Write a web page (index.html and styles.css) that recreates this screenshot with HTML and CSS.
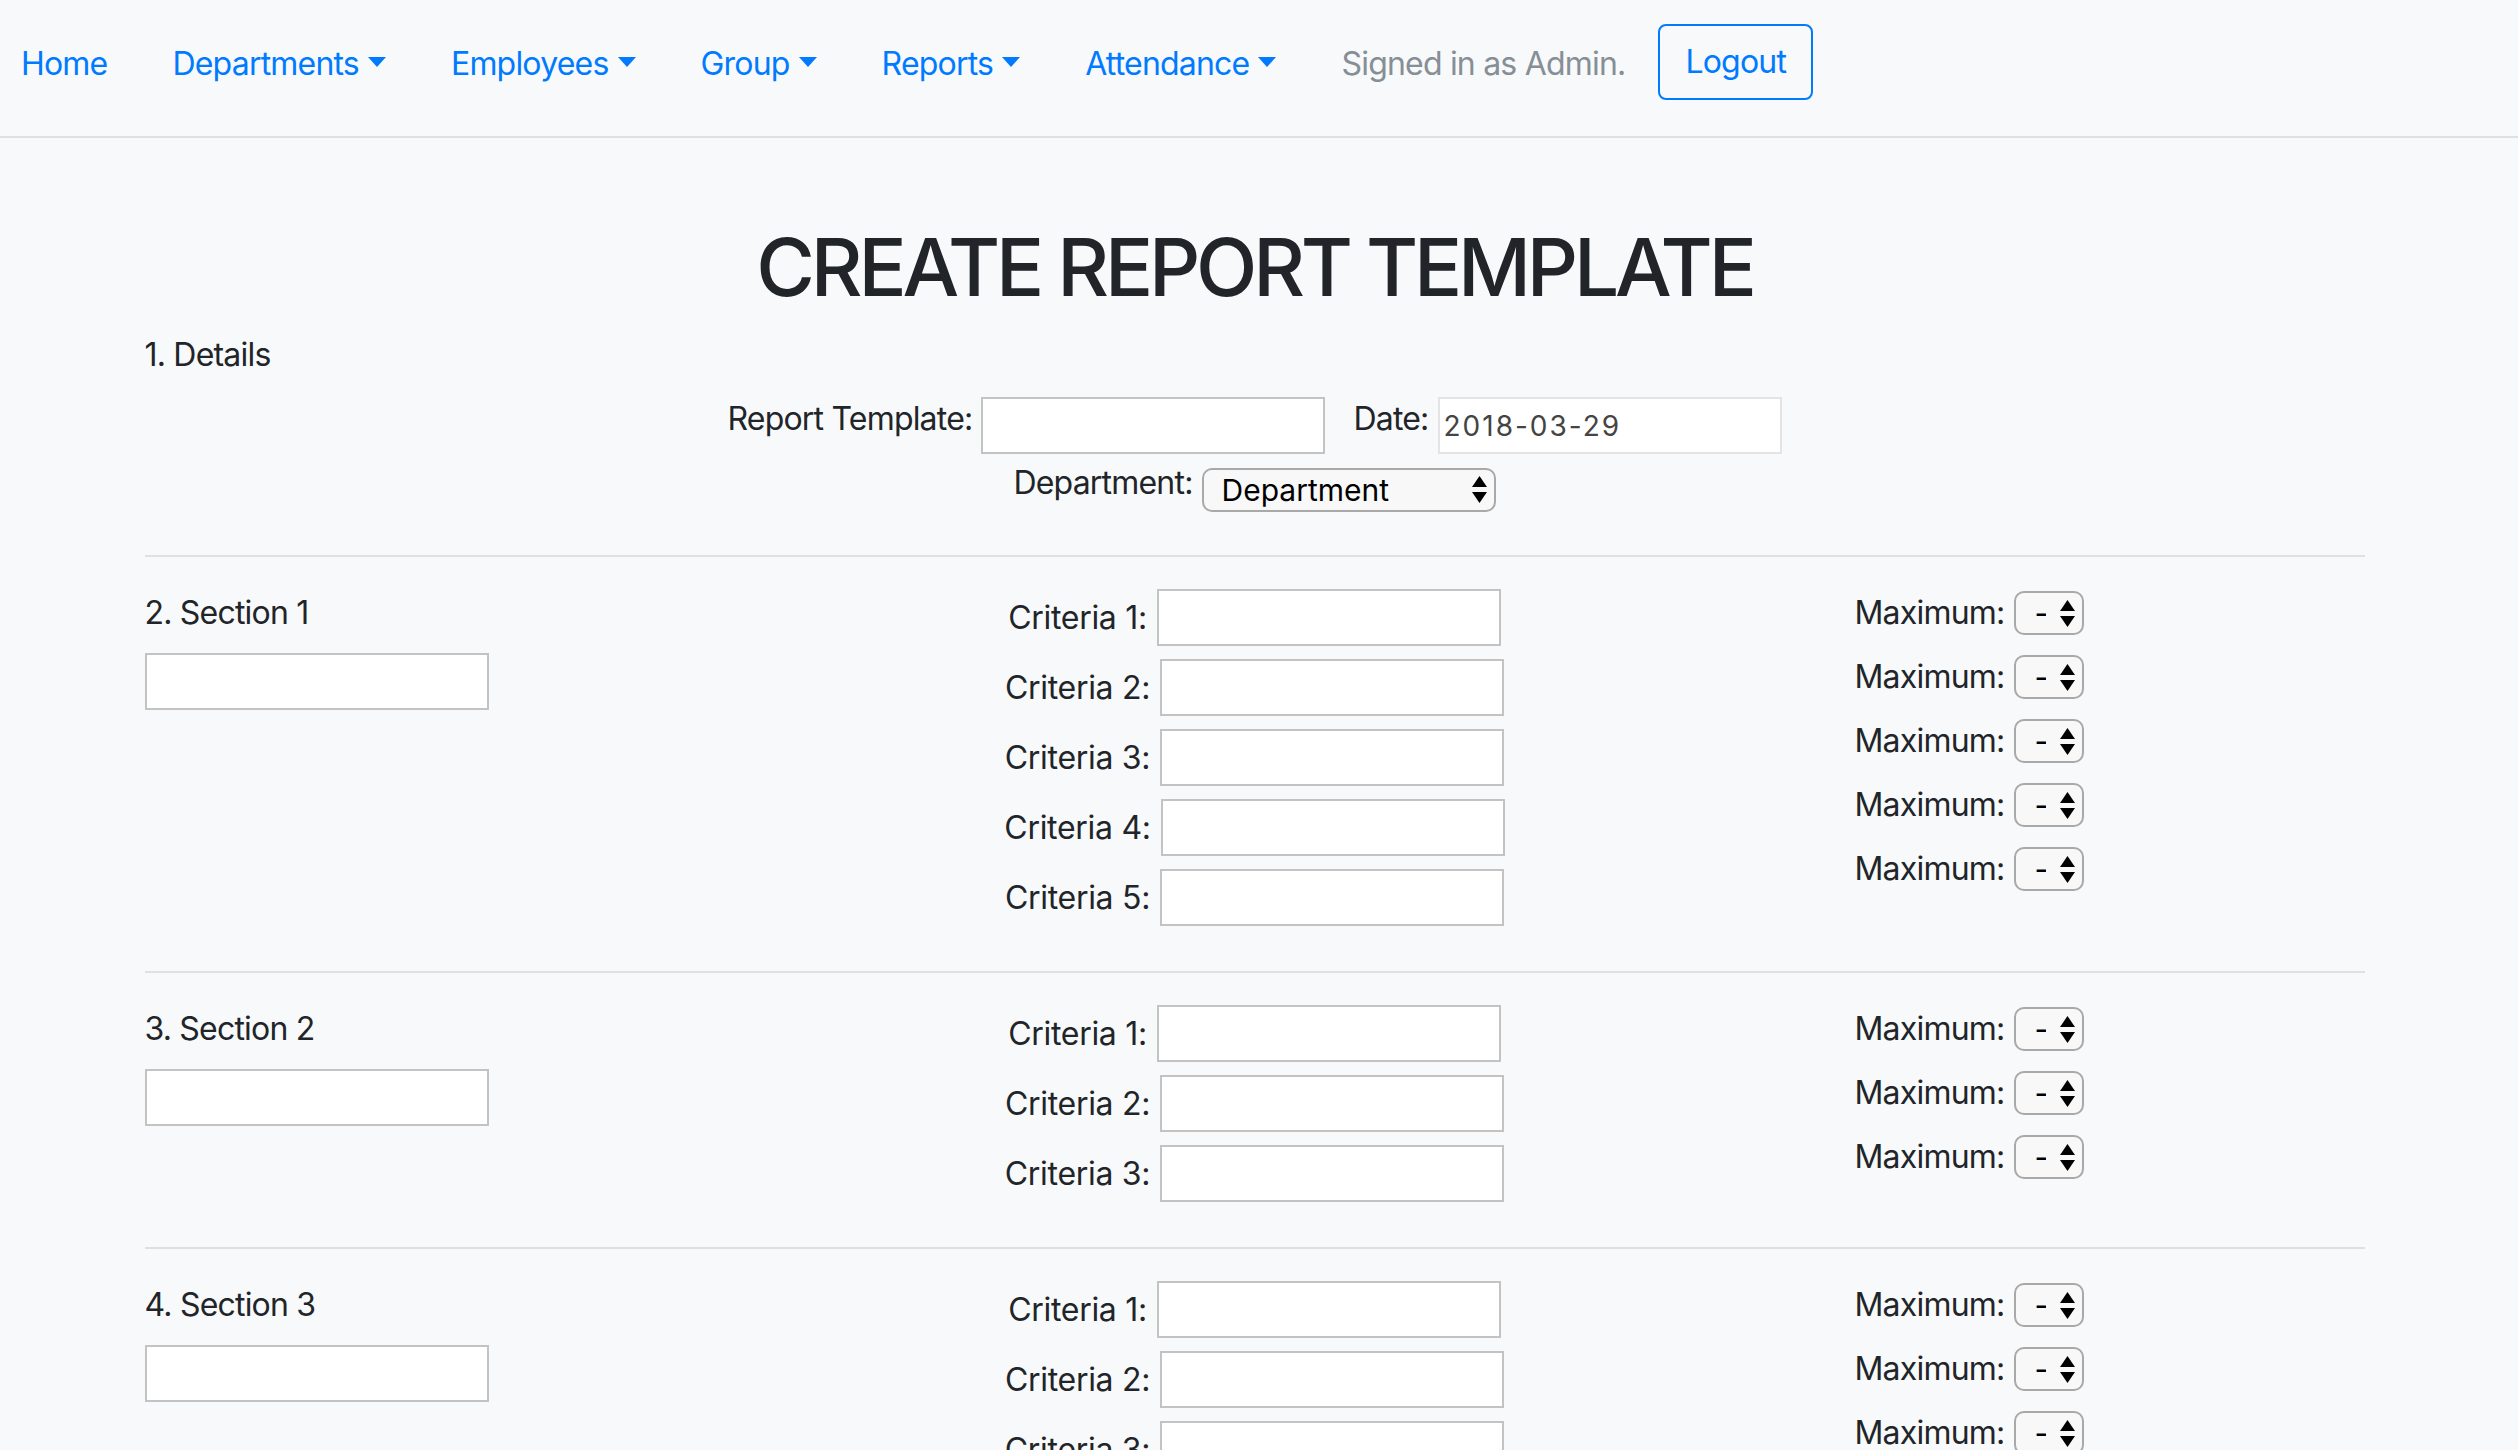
FILE: index.html
```html
<!DOCTYPE html>
<html lang="en">
<head>
<meta charset="utf-8">
<title>Create Report Template</title>
<link rel="stylesheet" href="styles.css">
</head>
<body>
<nav class="navbar">
  <ul class="nav">
    <li><a class="nav-link" href="#">Home</a></li>
    <li><a class="nav-link dropdown" href="#">Departments</a></li>
    <li><a class="nav-link dropdown" href="#">Employees</a></li>
    <li><a class="nav-link dropdown" href="#">Group</a></li>
    <li><a class="nav-link dropdown" href="#">Reports</a></li>
    <li><a class="nav-link dropdown" href="#">Attendance</a></li>
  </ul>
  <span class="navbar-text">Signed in as Admin.</span>
  <button class="btn-logout" type="button">Logout</button>
</nav>

<div class="page">
<main class="container">
  <h1 class="title">CREATE REPORT TEMPLATE</h1>
  <form class="report-form">
    <div class="details">
      <p class="step">1. Details</p>
      <div class="details-row">
        <label class="inline-label">Report Template:</label>
        <input class="field" type="text">
        <label class="inline-label date-label">Date:</label>
        <input class="field field-date" type="text" value="2018-03-29" disabled>
      </div>
      <div class="details-row details-row-2">
        <label class="inline-label">Department:</label>
        <span class="select select-lg">
          <select><option>Department</option></select>
          <svg class="select-arrows" viewBox="0 0 15 27"><polygon points="7.5,0 15,11 0,11"/><polygon points="0,16 15,16 7.5,27"/></svg>
        </span>
      </div>
    </div>

    <hr class="divider">
    <section class="section">
      <div class="section-name">
        <p class="step">2. Section 1</p>
        <input class="field" type="text">
      </div>
      <div class="criteria">
        <div class="criteria-row"><label class="crit-label">Criteria 1:</label><input class="field" type="text"></div>
        <div class="criteria-row"><label class="crit-label">Criteria 2:</label><input class="field" type="text"></div>
        <div class="criteria-row"><label class="crit-label">Criteria 3:</label><input class="field" type="text"></div>
        <div class="criteria-row"><label class="crit-label">Criteria 4:</label><input class="field" type="text"></div>
        <div class="criteria-row"><label class="crit-label">Criteria 5:</label><input class="field" type="text"></div>
      </div>
      <div class="maximums">
        <div class="max-row"><label>Maximum:</label><span class="select select-sm"><select><option>-</option></select><svg class="select-arrows" viewBox="0 0 15 27"><polygon points="7.5,0 15,11 0,11"/><polygon points="0,16 15,16 7.5,27"/></svg></span></div>
        <div class="max-row"><label>Maximum:</label><span class="select select-sm"><select><option>-</option></select><svg class="select-arrows" viewBox="0 0 15 27"><polygon points="7.5,0 15,11 0,11"/><polygon points="0,16 15,16 7.5,27"/></svg></span></div>
        <div class="max-row"><label>Maximum:</label><span class="select select-sm"><select><option>-</option></select><svg class="select-arrows" viewBox="0 0 15 27"><polygon points="7.5,0 15,11 0,11"/><polygon points="0,16 15,16 7.5,27"/></svg></span></div>
        <div class="max-row"><label>Maximum:</label><span class="select select-sm"><select><option>-</option></select><svg class="select-arrows" viewBox="0 0 15 27"><polygon points="7.5,0 15,11 0,11"/><polygon points="0,16 15,16 7.5,27"/></svg></span></div>
        <div class="max-row"><label>Maximum:</label><span class="select select-sm"><select><option>-</option></select><svg class="select-arrows" viewBox="0 0 15 27"><polygon points="7.5,0 15,11 0,11"/><polygon points="0,16 15,16 7.5,27"/></svg></span></div>
      </div>
    </section>

    <hr class="divider">
    <section class="section">
      <div class="section-name">
        <p class="step">3. Section 2</p>
        <input class="field" type="text">
      </div>
      <div class="criteria">
        <div class="criteria-row"><label class="crit-label">Criteria 1:</label><input class="field" type="text"></div>
        <div class="criteria-row"><label class="crit-label">Criteria 2:</label><input class="field" type="text"></div>
        <div class="criteria-row"><label class="crit-label">Criteria 3:</label><input class="field" type="text"></div>
      </div>
      <div class="maximums">
        <div class="max-row"><label>Maximum:</label><span class="select select-sm"><select><option>-</option></select><svg class="select-arrows" viewBox="0 0 15 27"><polygon points="7.5,0 15,11 0,11"/><polygon points="0,16 15,16 7.5,27"/></svg></span></div>
        <div class="max-row"><label>Maximum:</label><span class="select select-sm"><select><option>-</option></select><svg class="select-arrows" viewBox="0 0 15 27"><polygon points="7.5,0 15,11 0,11"/><polygon points="0,16 15,16 7.5,27"/></svg></span></div>
        <div class="max-row"><label>Maximum:</label><span class="select select-sm"><select><option>-</option></select><svg class="select-arrows" viewBox="0 0 15 27"><polygon points="7.5,0 15,11 0,11"/><polygon points="0,16 15,16 7.5,27"/></svg></span></div>
      </div>
    </section>

    <hr class="divider">
    <section class="section">
      <div class="section-name">
        <p class="step">4. Section 3</p>
        <input class="field" type="text">
      </div>
      <div class="criteria">
        <div class="criteria-row"><label class="crit-label">Criteria 1:</label><input class="field" type="text"></div>
        <div class="criteria-row"><label class="crit-label">Criteria 2:</label><input class="field" type="text"></div>
        <div class="criteria-row"><label class="crit-label">Criteria 3:</label><input class="field" type="text"></div>
      </div>
      <div class="maximums">
        <div class="max-row"><label>Maximum:</label><span class="select select-sm"><select><option>-</option></select><svg class="select-arrows" viewBox="0 0 15 27"><polygon points="7.5,0 15,11 0,11"/><polygon points="0,16 15,16 7.5,27"/></svg></span></div>
        <div class="max-row"><label>Maximum:</label><span class="select select-sm"><select><option>-</option></select><svg class="select-arrows" viewBox="0 0 15 27"><polygon points="7.5,0 15,11 0,11"/><polygon points="0,16 15,16 7.5,27"/></svg></span></div>
        <div class="max-row"><label>Maximum:</label><span class="select select-sm"><select><option>-</option></select><svg class="select-arrows" viewBox="0 0 15 27"><polygon points="7.5,0 15,11 0,11"/><polygon points="0,16 15,16 7.5,27"/></svg></span></div>
      </div>
    </section>
  </form>
</main>
</div>
</body>
</html>
```

FILE: styles.css
```css
* { box-sizing: border-box; }

html, body { margin: 0; padding: 0; }

body {
  background: #f8f9fa;
  color: #212529;
  font-family: Inter, "Noto Sans", "Liberation Sans", sans-serif;
  font-size: 32px;
  line-height: 48px;
  letter-spacing: -0.8px;
  overflow: hidden;
}

/* ---------- navbar ---------- */
.navbar {
  display: flex;
  align-items: flex-start;
  height: 138px;
  padding: 24px 0 0 21px;
  border-bottom: 2px solid #dfe0e1;
}

.nav {
  display: flex;
  gap: 65px;
  list-style: none;
  margin: 0;
  padding: 0;
}

.nav-link {
  display: block;
  padding: 16px 0;
  color: #007bff;
  text-decoration: none;
}

.dropdown::after {
  content: "";
  display: inline-block;
  margin-left: 9px;
  vertical-align: 8px;
  border-top: 10px solid;
  border-left: 9.5px solid transparent;
  border-right: 9.5px solid transparent;
}

.navbar-text {
  padding: 16px 0;
  margin-left: 65px;
  margin-right: 33px;
  color: #868e96;
}

.btn-logout {
  font: inherit;
  letter-spacing: inherit;
  line-height: 48px;
  color: #007bff;
  background: transparent;
  border: 2px solid #007bff;
  border-radius: 8px;
  padding: 12px 25px;
}

/* ---------- page ---------- */
.page { padding-right: 9px; }

.container {
  width: 2280px;
  margin: 0 auto;
  padding: 0 30px;
}

.title {
  margin: 81px 0 16px;
  font-size: 80px;
  line-height: 96px;
  font-weight: 500;
  letter-spacing: -4.2px;
  text-align: center;
}

.step { margin: 0; }

.details { padding-bottom: 11px; }

.details-row {
  display: flex;
  justify-content: center;
  align-items: center;
  margin-top: 18px;
}

.details-row-2 { margin-top: 13px; }

.inline-label {
  line-height: 32px;
  margin: 0 9px 13px 0;
}

.date-label { margin-left: 28px; }

/* ---------- inputs ---------- */
.field {
  width: 344px;
  height: 57px;
  margin: 0;
  padding: 0 4px;
  border: 2px solid #c3c3c3;
  border-radius: 0;
  background: #fff;
  font-family: Inter, "Noto Sans", sans-serif;
  font-size: 28px;
  color: #222;
}

.field-date {
  border-color: #e4e4e4;
  color: #444;
  letter-spacing: 2px;
}

.select {
  position: relative;
  display: inline-block;
}

.select select {
  -webkit-appearance: none;
  appearance: none;
  display: block;
  height: 44px;
  margin: 0;
  padding: 0 36px 0 18px;
  border: 2px solid #a9a9a9;
  border-radius: 10px;
  background: #f8f8f8;
  font-family: Inter, "Noto Sans", sans-serif;
  font-size: 30px;
  letter-spacing: 0;
  color: #000;
}

.select-lg select { width: 294px; }
.select-sm select { width: 70px; }

.select-arrows {
  position: absolute;
  right: 9px;
  top: 50%;
  width: 15px;
  height: 27px;
  margin-top: -13.5px;
  fill: #000;
  pointer-events: none;
}

/* ---------- sections ---------- */
.divider {
  border: 0;
  border-top: 2px solid #dfe0e1;
  margin: 32px 0 32px;
}

.section {
  display: grid;
  grid-template-columns: 510px 1080px 510px;
  column-gap: 60px;
}

.section-name .step { margin-bottom: 16px; }
.section-name .field { display: block; }

.criteria-row {
  display: flex;
  justify-content: center;
  align-items: center;
  gap: 10px;
  margin-bottom: 13px;
}

.crit-label { letter-spacing: -0.3px; }

.max-row {
  display: flex;
  align-items: center;
  gap: 10px;
  height: 48px;
  margin-bottom: 16px;
}
```
